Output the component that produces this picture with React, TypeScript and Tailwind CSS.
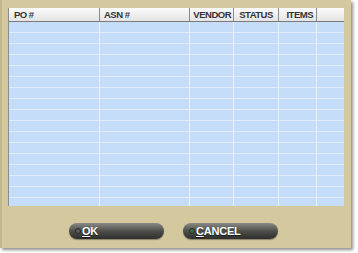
const columns = [
  { label: 'PO #', align: 'justify-start pl-[5px]' },
  { label: 'ASN #', align: 'justify-start pl-[4px]' },
  { label: 'VENDOR', align: 'justify-end pr-[2px]' },
  { label: 'STATUS', align: 'justify-center' },
  { label: 'ITEMS', align: 'justify-end pr-[3px]' },
  { label: '', align: 'justify-start' },
];

const ROWS = 17;

function PillButton({ hot, rest, dot }: { hot: string; rest: string; dot: string }) {
  return (
    <button className="flex items-center h-[16px] w-[95px] rounded-full bg-gradient-to-b from-[#8a8a86] via-[#4e4e4b] to-[#2e2e2c] shadow-[0_1px_1px_rgba(0,0,0,0.35)] pl-[6px]">
      <span className={`w-[6px] h-[6px] rounded-full ${dot} border border-[#2a2a2a]`} />
      <span className="ml-[1px] text-[11px] leading-none font-bold text-white [text-shadow:0_1px_1px_rgba(0,0,0,0.6)] tracking-[-0.2px]">
        <span className="underline underline-offset-1">{hot}</span>
        {rest}
      </span>
    </button>
  );
}

export default function App() {
  return (
    <div className="w-[358px] h-[253px] bg-white" style={{ fontFamily: '"Liberation Sans", Arial, sans-serif' }}>
      <div className="w-[351px] h-[248px] bg-[#d4c89f] border-l-2 border-[#c4b78c] shadow-[2px_2px_3px_rgba(0,0,0,0.45)] flex flex-col pt-[8px] pl-[6px]">
        <div className="w-[336px] h-[198px] flex flex-col bg-[#c6ddf9] border-l border-[#8c8c8c]">
          <div className="grid grid-cols-[91px_90px_44px_45px_38px_1fr] h-[14px] bg-gradient-to-b from-[#fbfbfb] to-[#e4e4e4] border-b border-[#7a7a7a]">
            {columns.map((c, i) => (
              <div
                key={i}
                className={`flex items-center ${c.align} ${i < 5 ? 'border-r border-[#8a8a8a]' : ''} text-[9.5px] font-bold text-[#333] tracking-[-0.5px] leading-none`}
              >
                {c.label}
              </div>
            ))}
          </div>
          <div className="flex-1 overflow-hidden">
            {Array.from({ length: ROWS }, (_, r) => (
              <div key={r} className="grid grid-cols-[91px_90px_44px_45px_38px_1fr] h-[11px] border-b border-[#e2edfb]">
                {columns.map((_, i) => (
                  <div key={i} className={i < 5 ? 'border-r border-[#eaf2fd]' : ''} />
                ))}
              </div>
            ))}
          </div>
        </div>
        <div className="flex justify-center gap-[19px] mt-[17px] pr-[12px]">
          <PillButton hot="O" rest="K" dot="bg-[#5a5a58]" />
          <PillButton hot="C" rest="ANCEL" dot="bg-[#3f6a34]" />
        </div>
      </div>
    </div>
  );
}
